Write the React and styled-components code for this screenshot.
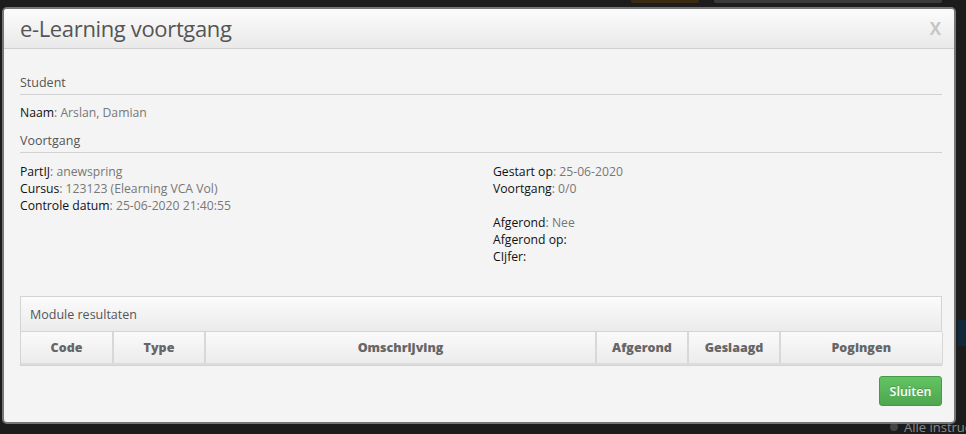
import React from "react";
import styled, { createGlobalStyle } from "styled-components";

const Global = createGlobalStyle`
  html, body { margin: 0; padding: 0; background: #1b1b1b; }
  body { font-family: "Open Sans", "DejaVu Sans", sans-serif; }
  * { box-sizing: border-box; }
`;

const Page = styled.div`
  position: relative;
  width: 966px;
  height: 434px;
  overflow: hidden;
  background: #1c1c1c;
`;

const TopStrip = styled.div`
  display: flex;
  height: 4px;
  padding-left: 631px;
  gap: 15px;
`;

const TopChip = styled.div`
  width: ${(p) => p.$w}px;
  height: 3px;
  background: ${(p) => p.$c};
  border-radius: 0 0 2px 2px;
`;

const SideBlock = styled.div`
  position: absolute;
  right: 0;
  top: 320px;
  width: 8px;
  height: 26px;
  background: #10283a;
`;

const BottomText = styled.div`
  position: absolute;
  left: 890px;
  top: 418px;
  width: 76px;
  overflow: hidden;
  font-size: 13px;
  color: #8a8a8a;
  white-space: nowrap;
  display: flex;
  align-items: center;
  gap: 6px;
`;

const Dot = styled.span`
  flex: none;
  width: 8px;
  height: 8px;
  border-radius: 50%;
  background: #444;
`;

const Modal = styled.div`
  position: absolute;
  left: 2px;
  top: 7px;
  width: 954px;
  height: 417px;
  border: 2px solid #767676;
  border-radius: 5px;
  background: #f4f4f4;
  overflow: hidden;
  display: flex;
  flex-direction: column;
`;

const Header = styled.div`
  height: 40px;
  flex: none;
  display: flex;
  align-items: center;
  justify-content: space-between;
  padding: 0 13px 2px 16px;
  background: linear-gradient(#fcfcfc, #e9e9e9);
  border-bottom: 1px solid #cfcfcf;
`;

const Title = styled.h3`
  margin: 0;
  font-size: 22px;
  font-weight: 500;
  color: #555;
  letter-spacing: -0.35px;
`;

const Close = styled.span`
  font-size: 17px;
  font-weight: 700;
  color: #c6c6c6;
  margin-top: 2px;
`;

const Body = styled.div`
  flex: 1;
  padding: 25px 12px 0 16px;
  display: flex;
  flex-direction: column;
`;

const SectionTitle = styled.div`
  font-size: 12.5px;
  line-height: 18px;
  color: #555;
  padding-bottom: 2px;
  border-bottom: 1px solid #d2d2d2;
  margin-top: ${(p) => p.$mt || 0}px;
`;

const Line = styled.div`
  font-size: 12.2px;
  line-height: 17px;
  height: 17px;
  color: #777;
  margin-top: ${(p) => p.$mt || 0}px;
`;

const Label = styled.span`
  color: #111;
  font-weight: 500;
`;

const Columns = styled.div`
  display: grid;
  grid-template-columns: 473px 1fr;
  margin-top: 10px;
`;

const Col = styled.div`
  display: flex;
  flex-direction: column;
`;

const Panel = styled.div`
  margin-top: 31px;
  border: 1px solid #d4d4d4;
  background: #f4f4f4;
`;

const PanelHeading = styled.div`
  height: 35px;
  padding: 0 9px;
  display: flex;
  align-items: center;
  font-size: 12.5px;
  color: #555;
  background: linear-gradient(#fbfbfb, #ebebeb);
  border-bottom: 1px solid #d4d4d4;
`;

const Table = styled.table`
  width: 100%;
  border-collapse: collapse;
  table-layout: fixed;
`;

const Th = styled.th`
  width: ${(p) => p.$w}px;
  height: 32px;
  padding: 0;
  font-size: 12.5px;
  font-weight: 800;
  color: #666;
  text-align: center;
  background: linear-gradient(#fafafa, #ececec);
  border-right: 2px solid #d8d8d8;
  border-bottom: 2px solid #dcdcdc;
  &:last-child { border-right: 1px solid #d8d8d8; }
`;

const Footer = styled.div`
  display: flex;
  justify-content: flex-end;
  margin-top: 10px;
`;

const Button = styled.button`
  width: 63px;
  height: 30px;
  font-family: inherit;
  font-size: 12.5px;
  font-weight: 600;
  color: #fff;
  text-shadow: 0 -1px 0 rgba(0, 0, 0, 0.2);
  background: linear-gradient(#62c462, #4fa64f);
  border: 1px solid #479947;
  border-radius: 3px;
  padding: 0;
`;

const columns = [
  ["Code", 92],
  ["Type", 92],
  ["Omschrijving", 391],
  ["Afgerond", 92],
  ["Geslaagd", 92],
  ["Pogingen", 162],
];

export default function App() {
  return (
    <>
      <Global />
      <Page>
        <TopStrip>
          <TopChip $w={68} $c="#3b2b12" />
          <TopChip $w={228} $c="#3a3a3a" />
        </TopStrip>
        <SideBlock />
        <BottomText>
          <Dot />
          Alle instructies
        </BottomText>
        <Modal>
          <Header>
            <Title>e-Learning voortgang</Title>
            <Close>X</Close>
          </Header>
          <Body>
            <SectionTitle>Student</SectionTitle>
            <Line $mt={9}>
              <Label>Naam</Label>: Arslan, Damian
            </Line>
            <SectionTitle $mt={11}>Voortgang</SectionTitle>
            <Columns>
              <Col>
                <Line>
                  <Label>PartIJ</Label>: anewspring
                </Line>
                <Line>
                  <Label>Cursus</Label>: 123123 (Elearning VCA Vol)
                </Line>
                <Line>
                  <Label>Controle datum</Label>: 25-06-2020 21:40:55
                </Line>
              </Col>
              <Col>
                <Line>
                  <Label>Gestart op</Label>: 25-06-2020
                </Line>
                <Line>
                  <Label>Voortgang</Label>: 0/0
                </Line>
                <Line />
                <Line>
                  <Label>Afgerond</Label>: Nee
                </Line>
                <Line>
                  <Label>Afgerond op:</Label>
                </Line>
                <Line>
                  <Label>CIjfer:</Label>
                </Line>
              </Col>
            </Columns>
            <Panel>
              <PanelHeading>Module resultaten</PanelHeading>
              <Table>
                <thead>
                  <tr>
                    {columns.map(([name, w]) => (
                      <Th key={name} $w={w}>
                        {name}
                      </Th>
                    ))}
                  </tr>
                </thead>
              </Table>
            </Panel>
            <Footer>
              <Button>Sluiten</Button>
            </Footer>
          </Body>
        </Modal>
      </Page>
    </>
  );
}
